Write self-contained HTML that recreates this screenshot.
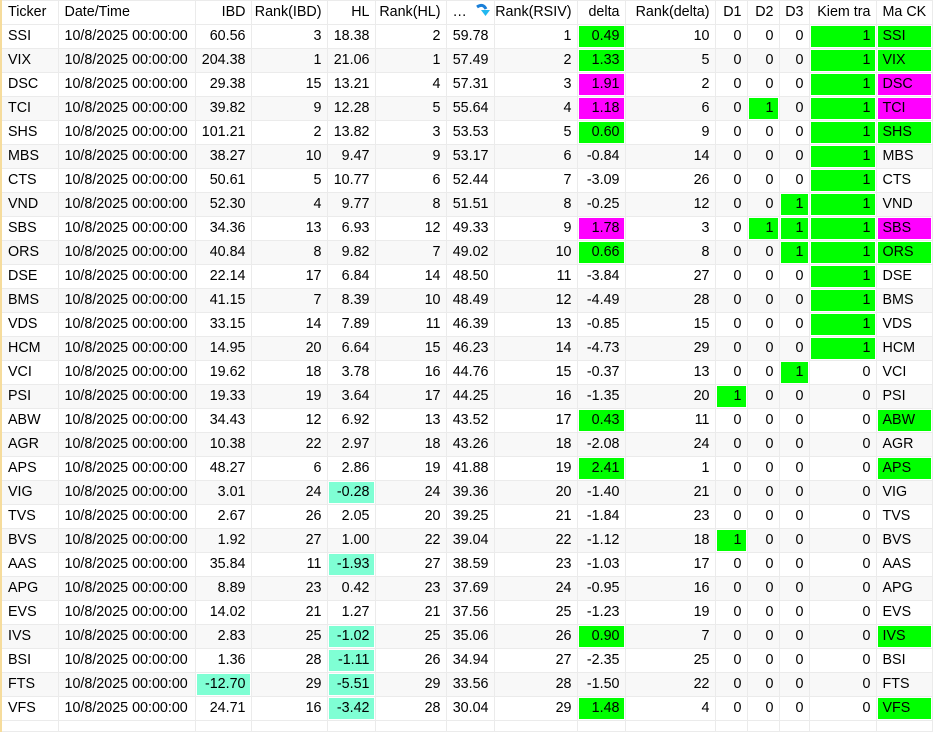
<!DOCTYPE html>
<html><head><meta charset="utf-8"><style>
body{margin:0;background:#fff;width:935px;height:731px;overflow:hidden;font-family:"Liberation Sans",sans-serif;font-size:14.3px;color:#000}
table{border-collapse:collapse;table-layout:fixed;width:931px;border-left:2px solid #f6dc9c}
td{height:23px;padding:0 5px 0 0;border:1px solid #ebebeb;text-align:right;white-space:nowrap;overflow:hidden;line-height:23px}
td.l{text-align:left;padding:0 0 0 6px}
tr.s td{background:#f8f8f8}
tr td.g{background:#00ff00;box-shadow:inset 0 0 0 1px #fff}
tr td.m{background:#ff00ff;box-shadow:inset 0 0 0 1px #fff}
tr td.a{background:#7fffd4;box-shadow:inset 0 0 0 1px #fff}
tr.e td{height:10px}
</style></head><body>
<table>
<colgroup><col style="width:57px"><col style="width:137px"><col style="width:56px"><col style="width:76px"><col style="width:48px"><col style="width:71px"><col style="width:48px"><col style="width:83px"><col style="width:48px"><col style="width:90px"><col style="width:32px"><col style="width:32px"><col style="width:30px"><col style="width:67px"><col style="width:56px"></colgroup>
<tr class="h"><td class="l">Ticker</td><td class="l">Date/Time</td><td>IBD</td><td>Rank(IBD)</td><td>HL</td><td>Rank(HL)</td><td class="l">… <svg width="16" height="16" viewBox="0 0 16 16" style="vertical-align:-3px;margin-left:4px"><path d="M2 4 Q8 0 11 6" stroke="#1a7fd8" stroke-width="3" fill="none"/><path d="M6 7 L15 7 L10.5 13 Z" fill="#22b8f0"/></svg></td><td>Rank(RSIV)</td><td>delta</td><td>Rank(delta)</td><td>D1</td><td>D2</td><td>D3</td><td>Kiem tra</td><td class="l">Ma CK</td></tr>
<tr><td class="l">SSI</td><td class="l">10/8/2025 00:00:00</td><td>60.56</td><td>3</td><td>18.38</td><td>2</td><td>59.78</td><td>1</td><td class="g">0.49</td><td>10</td><td>0</td><td>0</td><td>0</td><td class="g">1</td><td class="l g">SSI</td></tr>
<tr class="s"><td class="l">VIX</td><td class="l">10/8/2025 00:00:00</td><td>204.38</td><td>1</td><td>21.06</td><td>1</td><td>57.49</td><td>2</td><td class="g">1.33</td><td>5</td><td>0</td><td>0</td><td>0</td><td class="g">1</td><td class="l g">VIX</td></tr>
<tr><td class="l">DSC</td><td class="l">10/8/2025 00:00:00</td><td>29.38</td><td>15</td><td>13.21</td><td>4</td><td>57.31</td><td>3</td><td class="m">1.91</td><td>2</td><td>0</td><td>0</td><td>0</td><td class="g">1</td><td class="l m">DSC</td></tr>
<tr class="s"><td class="l">TCI</td><td class="l">10/8/2025 00:00:00</td><td>39.82</td><td>9</td><td>12.28</td><td>5</td><td>55.64</td><td>4</td><td class="m">1.18</td><td>6</td><td>0</td><td class="g">1</td><td>0</td><td class="g">1</td><td class="l m">TCI</td></tr>
<tr><td class="l">SHS</td><td class="l">10/8/2025 00:00:00</td><td>101.21</td><td>2</td><td>13.82</td><td>3</td><td>53.53</td><td>5</td><td class="g">0.60</td><td>9</td><td>0</td><td>0</td><td>0</td><td class="g">1</td><td class="l g">SHS</td></tr>
<tr class="s"><td class="l">MBS</td><td class="l">10/8/2025 00:00:00</td><td>38.27</td><td>10</td><td>9.47</td><td>9</td><td>53.17</td><td>6</td><td>-0.84</td><td>14</td><td>0</td><td>0</td><td>0</td><td class="g">1</td><td class="l">MBS</td></tr>
<tr><td class="l">CTS</td><td class="l">10/8/2025 00:00:00</td><td>50.61</td><td>5</td><td>10.77</td><td>6</td><td>52.44</td><td>7</td><td>-3.09</td><td>26</td><td>0</td><td>0</td><td>0</td><td class="g">1</td><td class="l">CTS</td></tr>
<tr class="s"><td class="l">VND</td><td class="l">10/8/2025 00:00:00</td><td>52.30</td><td>4</td><td>9.77</td><td>8</td><td>51.51</td><td>8</td><td>-0.25</td><td>12</td><td>0</td><td>0</td><td class="g">1</td><td class="g">1</td><td class="l">VND</td></tr>
<tr><td class="l">SBS</td><td class="l">10/8/2025 00:00:00</td><td>34.36</td><td>13</td><td>6.93</td><td>12</td><td>49.33</td><td>9</td><td class="m">1.78</td><td>3</td><td>0</td><td class="g">1</td><td class="g">1</td><td class="g">1</td><td class="l m">SBS</td></tr>
<tr class="s"><td class="l">ORS</td><td class="l">10/8/2025 00:00:00</td><td>40.84</td><td>8</td><td>9.82</td><td>7</td><td>49.02</td><td>10</td><td class="g">0.66</td><td>8</td><td>0</td><td>0</td><td class="g">1</td><td class="g">1</td><td class="l g">ORS</td></tr>
<tr><td class="l">DSE</td><td class="l">10/8/2025 00:00:00</td><td>22.14</td><td>17</td><td>6.84</td><td>14</td><td>48.50</td><td>11</td><td>-3.84</td><td>27</td><td>0</td><td>0</td><td>0</td><td class="g">1</td><td class="l">DSE</td></tr>
<tr class="s"><td class="l">BMS</td><td class="l">10/8/2025 00:00:00</td><td>41.15</td><td>7</td><td>8.39</td><td>10</td><td>48.49</td><td>12</td><td>-4.49</td><td>28</td><td>0</td><td>0</td><td>0</td><td class="g">1</td><td class="l">BMS</td></tr>
<tr><td class="l">VDS</td><td class="l">10/8/2025 00:00:00</td><td>33.15</td><td>14</td><td>7.89</td><td>11</td><td>46.39</td><td>13</td><td>-0.85</td><td>15</td><td>0</td><td>0</td><td>0</td><td class="g">1</td><td class="l">VDS</td></tr>
<tr class="s"><td class="l">HCM</td><td class="l">10/8/2025 00:00:00</td><td>14.95</td><td>20</td><td>6.64</td><td>15</td><td>46.23</td><td>14</td><td>-4.73</td><td>29</td><td>0</td><td>0</td><td>0</td><td class="g">1</td><td class="l">HCM</td></tr>
<tr><td class="l">VCI</td><td class="l">10/8/2025 00:00:00</td><td>19.62</td><td>18</td><td>3.78</td><td>16</td><td>44.76</td><td>15</td><td>-0.37</td><td>13</td><td>0</td><td>0</td><td class="g">1</td><td>0</td><td class="l">VCI</td></tr>
<tr class="s"><td class="l">PSI</td><td class="l">10/8/2025 00:00:00</td><td>19.33</td><td>19</td><td>3.64</td><td>17</td><td>44.25</td><td>16</td><td>-1.35</td><td>20</td><td class="g">1</td><td>0</td><td>0</td><td>0</td><td class="l">PSI</td></tr>
<tr><td class="l">ABW</td><td class="l">10/8/2025 00:00:00</td><td>34.43</td><td>12</td><td>6.92</td><td>13</td><td>43.52</td><td>17</td><td class="g">0.43</td><td>11</td><td>0</td><td>0</td><td>0</td><td>0</td><td class="l g">ABW</td></tr>
<tr class="s"><td class="l">AGR</td><td class="l">10/8/2025 00:00:00</td><td>10.38</td><td>22</td><td>2.97</td><td>18</td><td>43.26</td><td>18</td><td>-2.08</td><td>24</td><td>0</td><td>0</td><td>0</td><td>0</td><td class="l">AGR</td></tr>
<tr><td class="l">APS</td><td class="l">10/8/2025 00:00:00</td><td>48.27</td><td>6</td><td>2.86</td><td>19</td><td>41.88</td><td>19</td><td class="g">2.41</td><td>1</td><td>0</td><td>0</td><td>0</td><td>0</td><td class="l g">APS</td></tr>
<tr class="s"><td class="l">VIG</td><td class="l">10/8/2025 00:00:00</td><td>3.01</td><td>24</td><td class="a">-0.28</td><td>24</td><td>39.36</td><td>20</td><td>-1.40</td><td>21</td><td>0</td><td>0</td><td>0</td><td>0</td><td class="l">VIG</td></tr>
<tr><td class="l">TVS</td><td class="l">10/8/2025 00:00:00</td><td>2.67</td><td>26</td><td>2.05</td><td>20</td><td>39.25</td><td>21</td><td>-1.84</td><td>23</td><td>0</td><td>0</td><td>0</td><td>0</td><td class="l">TVS</td></tr>
<tr class="s"><td class="l">BVS</td><td class="l">10/8/2025 00:00:00</td><td>1.92</td><td>27</td><td>1.00</td><td>22</td><td>39.04</td><td>22</td><td>-1.12</td><td>18</td><td class="g">1</td><td>0</td><td>0</td><td>0</td><td class="l">BVS</td></tr>
<tr><td class="l">AAS</td><td class="l">10/8/2025 00:00:00</td><td>35.84</td><td>11</td><td class="a">-1.93</td><td>27</td><td>38.59</td><td>23</td><td>-1.03</td><td>17</td><td>0</td><td>0</td><td>0</td><td>0</td><td class="l">AAS</td></tr>
<tr class="s"><td class="l">APG</td><td class="l">10/8/2025 00:00:00</td><td>8.89</td><td>23</td><td>0.42</td><td>23</td><td>37.69</td><td>24</td><td>-0.95</td><td>16</td><td>0</td><td>0</td><td>0</td><td>0</td><td class="l">APG</td></tr>
<tr><td class="l">EVS</td><td class="l">10/8/2025 00:00:00</td><td>14.02</td><td>21</td><td>1.27</td><td>21</td><td>37.56</td><td>25</td><td>-1.23</td><td>19</td><td>0</td><td>0</td><td>0</td><td>0</td><td class="l">EVS</td></tr>
<tr class="s"><td class="l">IVS</td><td class="l">10/8/2025 00:00:00</td><td>2.83</td><td>25</td><td class="a">-1.02</td><td>25</td><td>35.06</td><td>26</td><td class="g">0.90</td><td>7</td><td>0</td><td>0</td><td>0</td><td>0</td><td class="l g">IVS</td></tr>
<tr><td class="l">BSI</td><td class="l">10/8/2025 00:00:00</td><td>1.36</td><td>28</td><td class="a">-1.11</td><td>26</td><td>34.94</td><td>27</td><td>-2.35</td><td>25</td><td>0</td><td>0</td><td>0</td><td>0</td><td class="l">BSI</td></tr>
<tr class="s"><td class="l">FTS</td><td class="l">10/8/2025 00:00:00</td><td class="a">-12.70</td><td>29</td><td class="a">-5.51</td><td>29</td><td>33.56</td><td>28</td><td>-1.50</td><td>22</td><td>0</td><td>0</td><td>0</td><td>0</td><td class="l">FTS</td></tr>
<tr><td class="l">VFS</td><td class="l">10/8/2025 00:00:00</td><td>24.71</td><td>16</td><td class="a">-3.42</td><td>28</td><td>30.04</td><td>29</td><td class="g">1.48</td><td>4</td><td>0</td><td>0</td><td>0</td><td>0</td><td class="l g">VFS</td></tr>
<tr class="e"><td></td><td></td><td></td><td></td><td></td><td></td><td></td><td></td><td></td><td></td><td></td><td></td><td></td><td></td><td></td></tr>
</table>
</body></html>
